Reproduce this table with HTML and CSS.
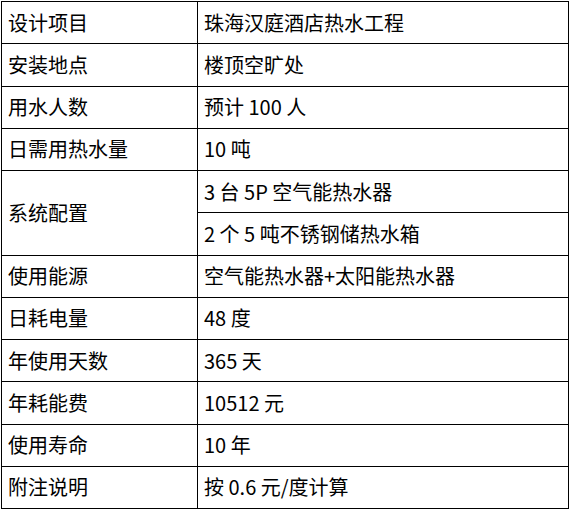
FILE: index.html
```html
<!DOCTYPE html>
<html lang="zh-CN">
<head>
<meta charset="utf-8">
<title>珠海汉庭酒店热水工程</title>
<link rel="stylesheet" href="styles.css">
</head>
<body>
<table class="spec">
  <colgroup><col class="c-label"><col class="c-value"></colgroup>
  <tbody>
    <tr><td>设计项目</td><td>珠海汉庭酒店热水工程</td></tr>
    <tr><td>安装地点</td><td>楼顶空旷处</td></tr>
    <tr><td>用水人数</td><td>预计 100 人</td></tr>
    <tr><td>日需用热水量</td><td>10 吨</td></tr>
    <tr><td rowspan="2">系统配置</td><td>3 台 5P 空气能热水器</td></tr>
    <tr><td>2 个 5 吨不锈钢储热水箱</td></tr>
    <tr><td>使用能源</td><td>空气能热水器+太阳能热水器</td></tr>
    <tr><td>日耗电量</td><td>48 度</td></tr>
    <tr><td>年使用天数</td><td>365 天</td></tr>
    <tr><td>年耗能费</td><td>10512 元</td></tr>
    <tr><td>使用寿命</td><td>10 年</td></tr>
    <tr><td>附注说明</td><td>按 0.6 元/度计算</td></tr>
  </tbody>
</table>
</body>
</html>
```
FILE: styles.css
```css
html, body {
  margin: 0;
  padding: 0;
  background: #fff;
}
body {
  font-family: "Noto Sans CJK SC", "Noto Sans", sans-serif;
  font-size: 20px;
  color: #000;
}
.spec {
  border-collapse: collapse;
  margin: 1px 0 0 1px;
  width: 568px;
  table-layout: fixed;
}
.c-label { width: 196px; }
.spec td {
  border: 1px solid #000;
  height: 42.25px;
  padding: 0 6px;
  vertical-align: middle;
  line-height: 24px;
  white-space: nowrap;
  box-sizing: border-box;
}
```
